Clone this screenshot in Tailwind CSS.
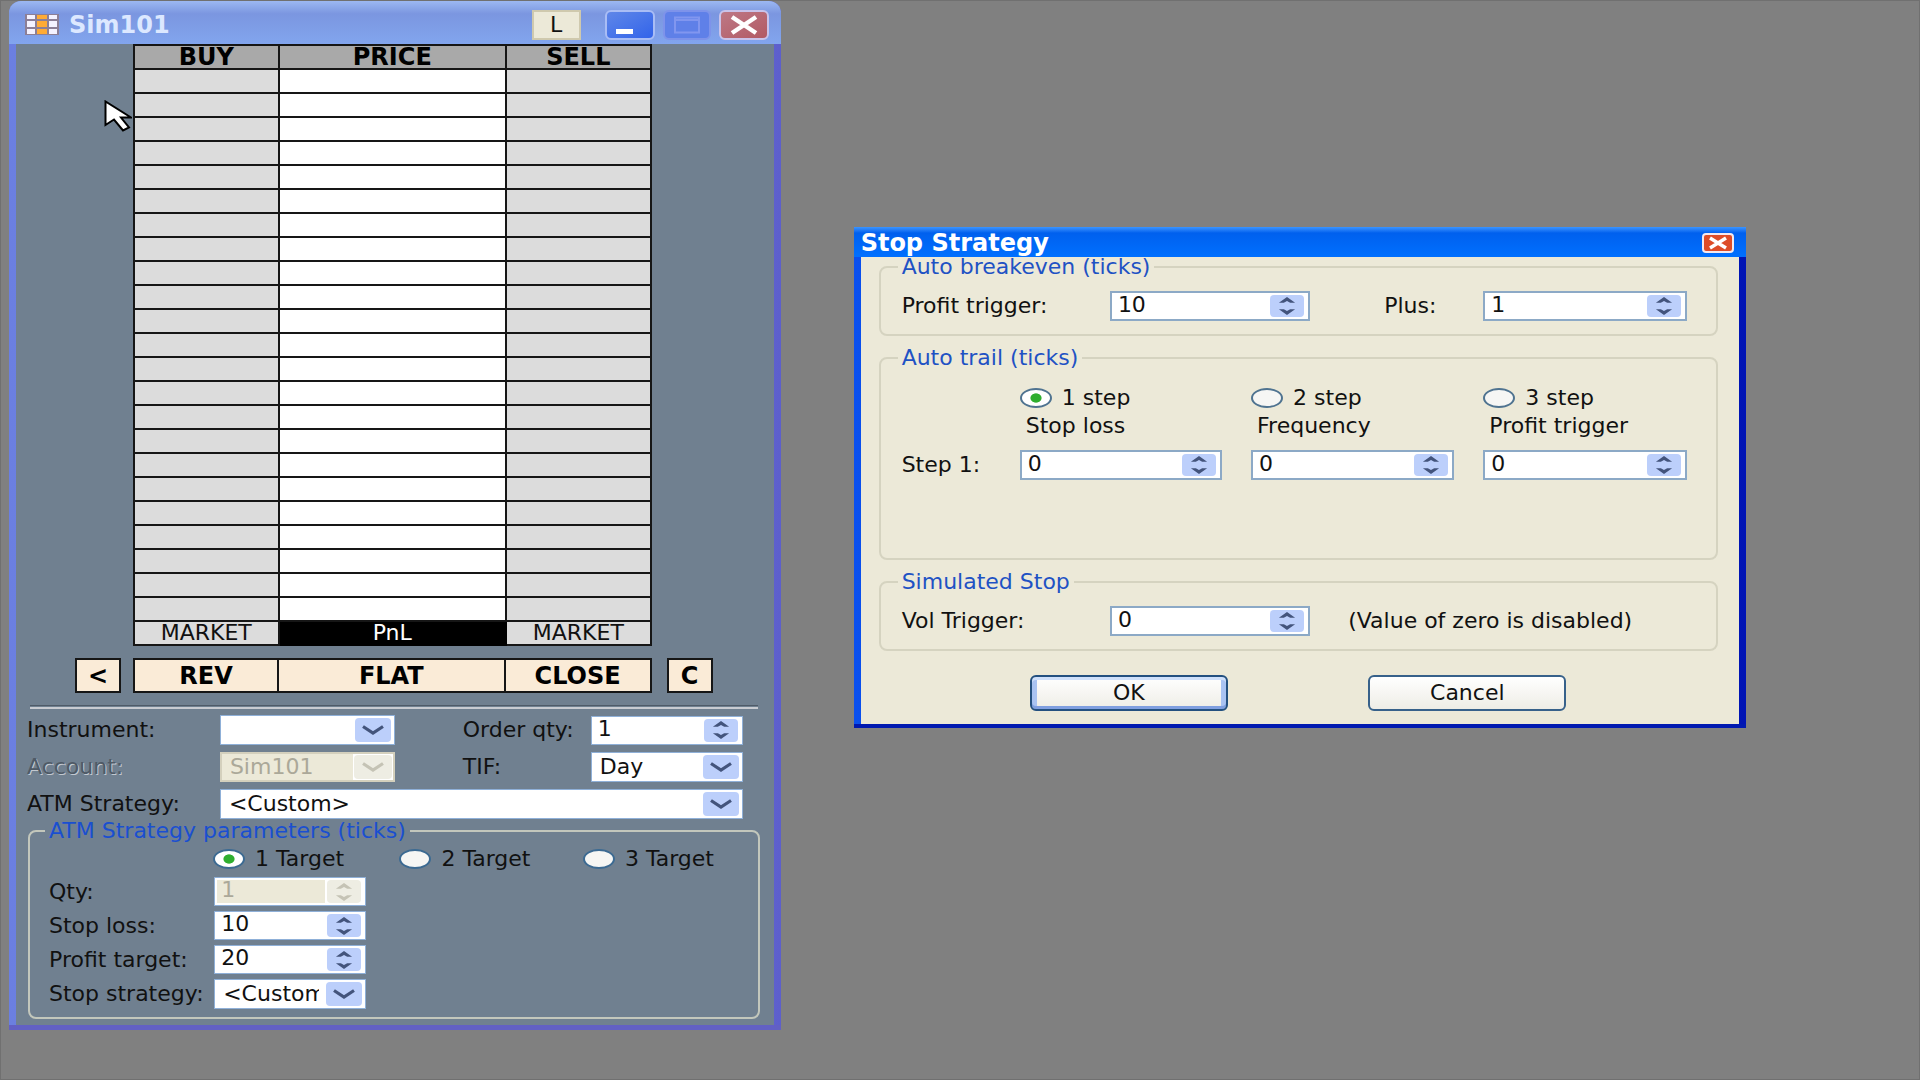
<!DOCTYPE html>
<html lang="en">
  <head>
    <meta charset="UTF-8" />
    <meta name="viewport" content="width=device-width, initial-scale=1.0" />
    <title>Sim101</title>
    <script src="https://cdn.jsdelivr.net/npm/@tailwindcss/browser@4"></script>
  </head>
  <body class="bg-[#808080] font-['DejaVu_Sans',sans-serif] text-[22px] leading-[24px] text-[#111]">
    <!-- Shared arrow glyphs -->
    <svg class="hidden">
      <symbol id="chevron" viewBox="0 0 22 10"><path d="M1 1.5 L11 8 L21 1.5" fill="none" stroke="currentColor" stroke-width="3.2" /></symbol>
      <symbol id="spin" viewBox="0 0 18 20"><path d="M0 6.5 L9 0 L18 6.5 H12.5 L9 4.5 L5.5 6.5 Z M0 13.5 L9 20 L18 13.5 H12.5 L9 15.5 L5.5 13.5 Z" fill="currentColor" /></symbol>
    </svg>

    <div class="relative flex items-start min-h-screen border border-[#707070] pl-2">
      <!-- Order entry window -->
      <main class="w-[40.4%] shrink-0 rounded-t-xl border-b-[5px] border-b-[#6260c4] bg-gradient-to-r from-[#6b7fe0] via-[#7c98e4] to-[#5d5fcc]">
        <header class="flex items-center h-[43px] rounded-t-xl pl-4 pr-3 pt-1 bg-gradient-to-b from-[#9cb8f2] via-[#7b96e0] via-30% to-[#82a5ee]">
          <svg class="w-[34px] h-[21px] mr-2.5" viewBox="0 0 34 21">
            <rect width="34" height="21" fill="#8c7f96" />
            <path d="M2 1h8v4H2zM2 7h8v6H2zM2 15h8v5H2zM24 1h8v4h-8zM24 7h8v6h-8zM24 15h8v5h-8z" fill="#f4f2ff" />
            <path d="M12 1h10v4H12zM12 7h10v6H12zM12 15h10v5H12z" fill="#ffab35" />
          </svg>
          <h1 class="text-[24px] font-bold text-[#dce8ff]">Sim101</h1>
          <button class="ml-auto mr-6 w-[49px] h-[30px] border-2 border-[#cfc9ae] bg-[#ece9d8]">L</button>
          <button aria-label="Minimize" class="w-[50px] h-[30px] mr-2 rounded-md border-2 border-[#a9bdf5] bg-gradient-to-br from-[#5f86e8] to-[#3263ea]">
            <svg class="w-full h-full" viewBox="0 0 46 26"><path d="M9 17h17v5H9z" fill="#fff" /></svg>
          </button>
          <button aria-label="Maximize" class="w-[48px] h-[30px] mr-2 rounded-md border-2 border-[#7e93ea] bg-[#5f80e8]">
            <svg class="w-full h-full" viewBox="0 0 44 26"><path d="M10 5.5h24v15H10zM10 8h24" fill="none" stroke="#8196ef" stroke-width="2" /></svg>
          </button>
          <button aria-label="Close" class="w-[50px] h-[30px] rounded-md border-2 border-[#c9c3ea] bg-gradient-to-br from-[#bd7886] to-[#b25a64]">
            <svg class="w-full h-full" viewBox="0 0 46 26"><path d="M11 5L35 21M35 5L11 21" stroke="#fff" stroke-width="4.5" /></svg>
          </button>
        </header>

        <div class="mx-[7px] bg-[#708090] pb-1.5">
          <!-- Price ladder -->
          <div class="grid grid-cols-[59fr_46fr_12fr_519fr_15fr_46fr_61fr]">
            <table class="col-start-4 w-full table-fixed border-collapse leading-[20px] bg-[#dcdcdc]">
              <colgroup>
                <col class="w-[28%]" />
                <col class="w-[44%]" />
                <col class="w-[28%]" />
              </colgroup>
              <thead class="bg-[#a9a9a9] text-[24px] text-black">
                <tr class="h-6">
                  <th class="border-2 border-[#161616] p-0">BUY</th>
                  <th class="border-2 border-[#161616] p-0">PRICE</th>
                  <th class="border-2 border-[#161616] p-0">SELL</th>
                </tr>
              </thead>
              <tbody id="ladder">
                <tr class="h-6">
                  <td class="border-2 border-[#161616] p-0"></td>
                  <td class="border-2 border-[#161616] p-0 bg-white"></td>
                  <td class="border-2 border-[#161616] p-0"></td>
                </tr>
              </tbody>
              <tfoot class="text-center">
                <tr class="h-6">
                  <td class="border-2 border-[#161616] p-0">MARKET</td>
                  <td class="border-2 border-black p-0 bg-black text-white">PnL</td>
                  <td class="border-2 border-[#161616] p-0">MARKET</td>
                </tr>
              </tfoot>
            </table>
          </div>

          <!-- Position buttons -->
          <div class="mt-3 grid grid-cols-[59fr_46fr_12fr_519fr_15fr_46fr_61fr] h-[35px] text-[24px] font-bold text-black">
            <button class="col-start-2 border-2 border-[#161616] bg-[#faebd7]">&lt;</button>
            <div class="col-start-4 grid grid-cols-[28fr_44fr_28fr] divide-x-2 divide-[#161616] border-2 border-[#161616] bg-[#faebd7]">
              <button>REV</button>
              <button>FLAT</button>
              <button>CLOSE</button>
            </div>
            <button class="col-start-6 border-2 border-[#161616] bg-[#faebd7]">C</button>
          </div>

          <div class="mt-3 ml-[14px] mr-4 h-1 border-t border-b-2 border-t-[#4f5b68] border-b-[#c9ccd2]"></div>

          <!-- Order settings -->
          <div class="mt-1.5 pl-[11px] pr-[31px] grid grid-cols-[193fr_175fr_68fr_128fr_152fr] gap-y-[7px] items-center whitespace-nowrap">
            <label for="instrument">Instrument:</label>
            <div class="relative min-w-0">
              <select id="instrument" class="block w-full h-[30px] appearance-none border border-[#8fb0d8] bg-white pl-2 pr-10"><option></option></select>
              <span class="pointer-events-none absolute top-[3px] bottom-[3px] right-1 w-9 grid place-items-center rounded-sm bg-[#bccffb] text-[#43547c]"><svg class="w-[22px] h-[10px]"><use href="#chevron" /></svg></span>
            </div>
            <label for="order-qty" class="col-start-4">Order qty:</label>
            <div class="flex min-w-0 h-[29px] border border-[#8fb0d8] bg-white p-0.5 pr-1">
              <input id="order-qty" type="text" value="1" class="min-w-0 flex-1 pl-1 pb-1 leading-[20px]" />
              <button aria-label="Change order qty" class="w-[34px] grid place-items-center rounded-sm bg-[#bccffb] text-[#43547c]"><svg class="w-[18px] h-[18px]"><use href="#spin" /></svg></button>
            </div>

            <label for="account" class="text-[#4f5a66] [text-shadow:1px_1px_0_#c3c9d0]">Account:</label>
            <div class="relative min-w-0">
              <select id="account" disabled class="block w-full h-[30px] appearance-none border-2 border-[#d4d0bd] bg-[#ece9d8] pl-2 pr-10 text-[#aba899] opacity-100"><option>Sim101</option></select>
              <span class="pointer-events-none absolute top-[2px] bottom-[2px] right-[2px] w-10 p-px bg-white text-[#c5c3b5]"><span class="grid h-full place-items-center rounded-sm bg-[#eeede3]"><svg class="w-[22px] h-[10px]"><use href="#chevron" /></svg></span></span>
            </div>
            <label for="tif" class="col-start-4">TIF:</label>
            <div class="relative min-w-0">
              <select id="tif" class="block w-full h-[30px] appearance-none border border-[#8fb0d8] bg-white pl-2 pr-10"><option>Day</option></select>
              <span class="pointer-events-none absolute top-[3px] bottom-[3px] right-1 w-9 grid place-items-center rounded-sm bg-[#bccffb] text-[#43547c]"><svg class="w-[22px] h-[10px]"><use href="#chevron" /></svg></span>
            </div>

            <label for="atm">ATM Strategy:</label>
            <div class="relative min-w-0 col-span-4">
              <select id="atm" class="block w-full h-[30px] appearance-none border border-[#8fb0d8] bg-white pl-2 pr-10"><option>&lt;Custom&gt;</option></select>
              <span class="pointer-events-none absolute top-[3px] bottom-[3px] right-1 w-9 grid place-items-center rounded-sm bg-[#bccffb] text-[#43547c]"><svg class="w-[22px] h-[10px]"><use href="#chevron" /></svg></span>
            </div>
          </div>

          <!-- ATM strategy parameters -->
          <fieldset class="min-w-0 mt-0.5 ml-3 mr-[14px] rounded-lg border-2 border-[#c3c7bc] pl-[19px] pr-5 pb-2">
            <legend class="-ml-1 px-1 leading-[20px] text-[#1a4fd0]">ATM Strategy parameters (ticks)</legend>
            <div class="mt-1.5 pl-[164px] grid grid-cols-[188fr_185fr_156fr] whitespace-nowrap">
              <label class="flex min-w-0 items-center gap-2.5"><input type="radio" name="target" checked class="shrink-0 w-8 h-5 appearance-none rounded-[50%] border-2 border-[#3c6a92] bg-white checked:bg-[radial-gradient(6px_5px,#2fae2f_85%,#fff)]" />1 Target</label>
              <label class="flex min-w-0 items-center gap-2.5"><input type="radio" name="target" class="shrink-0 w-8 h-5 appearance-none rounded-[50%] border-2 border-[#3c6a92] bg-[#f6f6f4]" />2 Target</label>
              <label class="flex min-w-0 items-center gap-2.5"><input type="radio" name="target" class="shrink-0 w-8 h-5 appearance-none rounded-[50%] border-2 border-[#3c6a92] bg-[#f6f6f4]" />3 Target</label>
            </div>
            <div class="mt-1.5 grid grid-cols-[166fr_153fr_373fr] gap-y-[5px] items-center whitespace-nowrap">
              <label for="qty">Qty:</label>
              <div class="flex min-w-0 h-[29px] border border-[#8fb0d8] bg-white p-0.5 pr-1">
                <input id="qty" type="text" value="1" disabled class="min-w-0 flex-1 bg-[#ece9d8] pl-1 pb-1 leading-[20px] text-[#aba899]" />
                <button disabled aria-label="Change qty" class="ml-0.5 w-[34px] grid place-items-center rounded-sm bg-[#eeede3] text-[#c5c3b5]"><svg class="w-[18px] h-[18px]"><use href="#spin" /></svg></button>
              </div>
              <label for="stop-loss" class="col-start-1">Stop loss:</label>
              <div class="flex min-w-0 h-[29px] border border-[#8fb0d8] bg-white p-0.5 pr-1">
                <input id="stop-loss" type="text" value="10" class="min-w-0 flex-1 pl-1 pb-1 leading-[20px]" />
                <button aria-label="Change stop loss" class="w-[34px] grid place-items-center rounded-sm bg-[#bccffb] text-[#43547c]"><svg class="w-[18px] h-[18px]"><use href="#spin" /></svg></button>
              </div>
              <label for="profit-target" class="col-start-1">Profit target:</label>
              <div class="flex min-w-0 h-[29px] border border-[#8fb0d8] bg-white p-0.5 pr-1">
                <input id="profit-target" type="text" value="20" class="min-w-0 flex-1 pl-1 pb-1 leading-[20px]" />
                <button aria-label="Change profit target" class="w-[34px] grid place-items-center rounded-sm bg-[#bccffb] text-[#43547c]"><svg class="w-[18px] h-[18px]"><use href="#spin" /></svg></button>
              </div>
              <label for="stop-strategy" class="col-start-1">Stop strategy:</label>
              <div class="relative min-w-0">
                <select id="stop-strategy" class="block w-full h-[30px] appearance-none border border-[#8fb0d8] bg-white pl-2 pr-[46px]"><option>&lt;Custom&gt;</option></select>
                <span class="pointer-events-none absolute top-[3px] bottom-[3px] right-1 w-9 grid place-items-center rounded-sm bg-[#bccffb] text-[#43547c]"><svg class="w-[22px] h-[10px]"><use href="#chevron" /></svg></span>
              </div>
            </div>
          </fieldset>
        </div>
      </main>

      <!-- Stop strategy dialog -->
      <section role="dialog" aria-labelledby="dialog-title" class="ml-[73px] mt-[226px] w-[46.7%] border-b-4 border-b-[#0019b0] bg-gradient-to-r from-[#0a50ee] to-[#0014b4]">
        <header class="flex items-center justify-between h-[30px] pl-[7px] pr-3 pt-0.5 bg-gradient-to-b from-[#3a94ff] via-[#0060ee] via-20% to-[#0070ff]">
          <h2 id="dialog-title" class="text-[24px] font-bold text-white">Stop Strategy</h2>
          <button aria-label="Close" class="w-8 h-5 rounded border-2 border-[#f4e9ee] bg-[#dd4c28]">
            <svg class="w-full h-full" viewBox="0 0 28 16"><path d="M6 3L22 13M22 3L6 13" stroke="#fff" stroke-width="3.5" /></svg>
          </button>
        </header>

        <form class="mx-[7px] bg-[#ece9d8] pl-[18px] pr-[21px] pb-[13px] whitespace-nowrap">
          <fieldset class="min-w-0 h-[79px] rounded-lg border-2 border-[#d5d3c0] pl-[21px] pr-[29px]">
            <legend class="-ml-1 px-1 leading-[20px] text-[#1f52c4]">Auto breakeven (ticks)</legend>
            <div class="mt-3.5 grid grid-cols-[208fr_200fr_74fr_99fr_203fr] items-center">
              <label for="be-trigger">Profit trigger:</label>
              <div class="flex min-w-0 h-[30px] border-2 border-[#8ca9c6] bg-white p-0.5 pr-1">
                <input id="be-trigger" type="text" value="10" class="min-w-0 flex-1 pl-1 pb-1 leading-[20px]" />
                <button type="button" aria-label="Change profit trigger" class="w-[34px] grid place-items-center rounded-sm bg-[#bccffb] text-[#43547c]"><svg class="w-[18px] h-[18px]"><use href="#spin" /></svg></button>
              </div>
              <label for="plus" class="col-start-4">Plus:</label>
              <div class="flex min-w-0 h-[30px] border-2 border-[#8ca9c6] bg-white p-0.5 pr-1">
                <input id="plus" type="text" value="1" class="min-w-0 flex-1 pl-1 pb-1 leading-[20px]" />
                <button type="button" aria-label="Change plus" class="w-[34px] grid place-items-center rounded-sm bg-[#bccffb] text-[#43547c]"><svg class="w-[18px] h-[18px]"><use href="#spin" /></svg></button>
              </div>
            </div>
          </fieldset>

          <fieldset class="min-w-0 mt-3 h-[212px] rounded-lg border-2 border-[#d5d3c0] pl-[21px] pr-[29px]">
            <legend class="-ml-1 px-1 leading-[20px] text-[#1f52c4]">Auto trail (ticks)</legend>
            <div class="mt-[18px] grid grid-cols-[118fr_202fr_29fr_203fr_29fr_203fr] items-center">
              <label class="col-start-2 flex items-center gap-2.5"><input type="radio" name="step" checked class="w-8 h-5 appearance-none rounded-[50%] border-2 border-[#4f7390] bg-white checked:bg-[radial-gradient(6px_5px,#2fae2f_85%,#fff)]" />1 step</label>
              <label class="col-start-4 flex items-center gap-2.5"><input type="radio" name="step" class="w-8 h-5 appearance-none rounded-[50%] border-2 border-[#4f7390] bg-[#f6f6f4]" />2 step</label>
              <label class="col-start-6 flex items-center gap-2.5"><input type="radio" name="step" class="w-8 h-5 appearance-none rounded-[50%] border-2 border-[#4f7390] bg-[#f6f6f4]" />3 step</label>

              <label for="step-loss" class="col-start-2 pl-1.5 mt-1">Stop loss</label>
              <label for="step-freq" class="col-start-4 pl-1.5 mt-1">Frequency</label>
              <label for="step-trigger" class="col-start-6 pl-1.5 mt-1">Profit trigger</label>

              <span class="mt-3">Step 1:</span>
              <div class="mt-3 flex min-w-0 h-[30px] border-2 border-[#8ca9c6] bg-white p-0.5 pr-1">
                <input id="step-loss" type="text" value="0" class="min-w-0 flex-1 pl-1 pb-1 leading-[20px]" />
                <button type="button" aria-label="Change stop loss" class="w-[34px] grid place-items-center rounded-sm bg-[#bccffb] text-[#43547c]"><svg class="w-[18px] h-[18px]"><use href="#spin" /></svg></button>
              </div>
              <div class="col-start-4 mt-3 flex min-w-0 h-[30px] border-2 border-[#8ca9c6] bg-white p-0.5 pr-1">
                <input id="step-freq" type="text" value="0" class="min-w-0 flex-1 pl-1 pb-1 leading-[20px]" />
                <button type="button" aria-label="Change frequency" class="w-[34px] grid place-items-center rounded-sm bg-[#bccffb] text-[#43547c]"><svg class="w-[18px] h-[18px]"><use href="#spin" /></svg></button>
              </div>
              <div class="col-start-6 mt-3 flex min-w-0 h-[30px] border-2 border-[#8ca9c6] bg-white p-0.5 pr-1">
                <input id="step-trigger" type="text" value="0" class="min-w-0 flex-1 pl-1 pb-1 leading-[20px]" />
                <button type="button" aria-label="Change profit trigger" class="w-[34px] grid place-items-center rounded-sm bg-[#bccffb] text-[#43547c]"><svg class="w-[18px] h-[18px]"><use href="#spin" /></svg></button>
              </div>
            </div>
          </fieldset>

          <fieldset class="min-w-0 mt-3 h-[79px] rounded-lg border-2 border-[#d5d3c0] pl-[21px] pr-[29px]">
            <legend class="-ml-1 px-1 leading-[20px] text-[#1f52c4]">Simulated Stop</legend>
            <div class="mt-3.5 grid grid-cols-[208fr_200fr_38fr_338fr] items-center">
              <label for="vol-trigger">Vol Trigger:</label>
              <div class="flex min-w-0 h-[30px] border-2 border-[#8ca9c6] bg-white p-0.5 pr-1">
                <input id="vol-trigger" type="text" value="0" class="min-w-0 flex-1 pl-1 pb-1 leading-[20px]" />
                <button type="button" aria-label="Change vol trigger" class="w-[34px] grid place-items-center rounded-sm bg-[#bccffb] text-[#43547c]"><svg class="w-[18px] h-[18px]"><use href="#spin" /></svg></button>
              </div>
              <span class="col-start-4">(Value of zero is disabled)</span>
            </div>
          </fieldset>

          <div class="mt-6 grid grid-cols-[151fr_198fr_140fr_198fr_151fr] h-9">
            <button type="submit" class="col-start-2 rounded-md border-2 border-[#23507f] bg-gradient-to-b from-white to-[#eeede6] shadow-[inset_0_3px_0_#cfe0fb,inset_0_-3px_0_#7f9fe0,inset_5px_0_0_#a9c3f2,inset_-5px_0_0_#a9c3f2]">OK</button>
            <button type="button" class="col-start-4 rounded-md border-2 border-[#37618a] bg-gradient-to-b from-white to-[#eeede6]">Cancel</button>
          </div>
        </form>
      </section>

      <!-- Mouse pointer -->
      <svg class="absolute left-[103px] top-[99px] w-7 h-8 pointer-events-none" viewBox="0 0 28 32">
        <path d="M1.5 1.5V25L10 19.5L19 30.5L25 27.5L17 17.5H27Z" fill="#fff" stroke="#000" stroke-width="2" />
      </svg>
    </div>

    <script>
      // The ladder shows 23 empty price levels
      const ladder = document.getElementById("ladder");
      const level = ladder.rows[0];
      for (let i = 1; i < 23; i++) ladder.appendChild(level.cloneNode(true));
    </script>
  </body>
</html>
